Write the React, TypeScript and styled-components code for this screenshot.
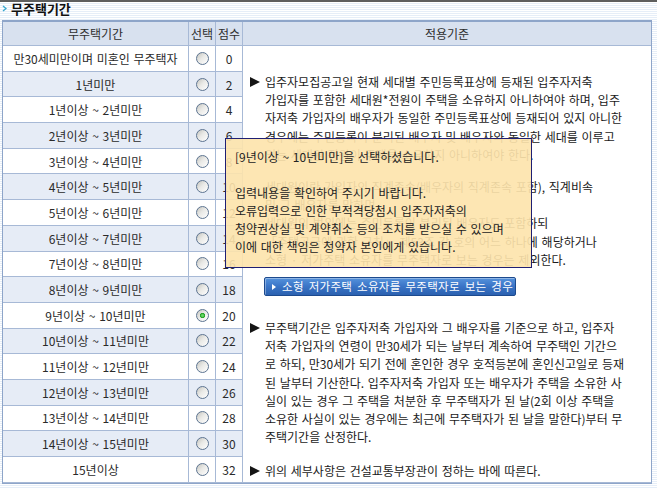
import styled, { createGlobalStyle } from 'styled-components';

const GlobalStyle = createGlobalStyle`
  html, body {
    margin: 0;
    padding: 0;
  }
  body {
    width: 657px;
    height: 489px;
    overflow: hidden;
    font-family: 'Noto Sans CJK KR', 'Noto Sans', sans-serif;
    font-size: 12px;
    color: #1a1a1a;
    background: repeating-linear-gradient(to bottom, #ffffff 0 1px, #e6eef8 1px 2px);
  }
`;

const Page = styled.div`
  position: relative;
  border-top: 2px solid #5e5e5e;
  padding-left: 2px;
`;

const Title = styled.h2`
  margin: 0;
  height: 18px;
  display: flex;
  align-items: flex-start;
  gap: 4px;
  font-size: 13px;
  font-weight: bold;
  line-height: 13px;
  color: #111;
  white-space: nowrap;
`;

const TitleIcon = styled.svg`
  flex: none;
  margin-top: 3px;
`;

const Board = styled.div`
  display: grid;
  grid-template-columns: 186px 27px 27px 408px;
  grid-template-rows: 24px repeat(17, 25.7px);
  width: 650px;
  box-sizing: border-box;
  border: 1px solid #8ea5c9;
  border-top-width: 2px;
  background: #fff;
`;

const HeadCell = styled.div<{ $last?: boolean }>`
  display: flex;
  align-items: center;
  justify-content: center;
  background: #d8e1ef;
  color: #2e2e2e;
  border-bottom: 1px solid #a7b9d6;
  border-right: ${p => (p.$last ? 'none' : '1px solid #a7b9d6')};
  white-space: nowrap;
`;

const Cell = styled.div<{ $alt: boolean }>`
  display: flex;
  align-items: center;
  justify-content: center;
  background: ${p => (p.$alt ? '#e6ecf6' : '#ffffff')};
  color: #2a2a2a;
  border-bottom: 1px solid #a7b9d6;
  border-right: 1px solid #a7b9d6;
  white-space: nowrap;
  word-spacing: 1px;
`;

const Radio = styled.input`
  appearance: none;
  margin: 0 0 0 1px;
  width: 13px;
  height: 13px;
  box-sizing: border-box;
  border-radius: 50%;
  border: 1px solid #5d7491;
  background: ${p =>
    p.checked
      ? 'radial-gradient(circle, #6ad86a 0 0.8px, #22a022 2.2px, transparent 3px), '
      : ''}linear-gradient(135deg, #c4c4be 0%, #e9e9e6 45%, #ffffff 100%);
`;

const Criteria = styled.div`
  grid-column: 4;
  grid-row: 2 / span 17;
  background: #fff;
  border-bottom: 1px solid #a7b9d6;
  padding: 27px 0 0 7px;
  overflow: hidden;
  line-height: 18.2px;
  word-spacing: 1px;
`;

const Para = styled.div<{ $gap?: number; $indent?: boolean }>`
  display: flex;
  margin-top: ${p => p.$gap ?? 0}px;
  padding-left: ${p => (p.$indent ? 15 : 0)}px;
`;

const Bullet = styled.span`
  flex: none;
  width: 0;
  height: 0;
  margin: 4px 5px 0 0;
  border-left: 10px solid #151515;
  border-top: 5px solid transparent;
  border-bottom: 5px solid transparent;
`;

const Lines = styled.div`
  display: flex;
  flex-direction: column;
`;

const Line = styled.span`
  white-space: nowrap;
  min-height: 18px;
`;

const LinkButton = styled.a`
  display: flex;
  align-items: center;
  gap: 6px;
  width: 252px;
  height: 19px;
  box-sizing: border-box;
  margin: 8px 0 0 14px;
  padding: 0 7px;
  border: 1px solid #1d4a8e;
  border-radius: 2px;
  background: linear-gradient(to bottom, #5592dc 0%, #3a74c6 50%, #2b61b0 100%);
  box-shadow: inset 1px 1px 0 rgba(255, 255, 255, 0.35);
  color: #fff;
  font-size: 11.5px;
  letter-spacing: 0.3px;
  word-spacing: 2px;
  text-decoration: none;
  white-space: nowrap;
  cursor: pointer;
`;

const ButtonArrow = styled.span`
  flex: none;
  width: 0;
  height: 0;
  border-left: 4px solid #fff;
  border-top: 3px solid transparent;
  border-bottom: 3px solid transparent;
`;

const Tooltip = styled.div`
  position: absolute;
  left: 225px;
  top: 136px;
  width: 307px;
  height: 130px;
  box-sizing: border-box;
  padding: 9px 9px;
  border: 1px solid #1f1f74;
  background: rgba(253, 228, 172, 0.91);
  color: #222;
  line-height: 18px;
  word-spacing: 1px;
  display: flex;
  flex-direction: column;
`;

type Period = { label: string; score: number };

const periods: Period[] = [
  { label: '만30세미만이며 미혼인 무주택자', score: 0 },
  { label: '1년미만', score: 2 },
  ...Array.from({ length: 14 }, (_, i) => ({
    label: `${i + 1}년이상 ~ ${i + 2}년미만`,
    score: 4 + i * 2,
  })),
  { label: '15년이상', score: 32 },
];

const selected = 10;

const para1 = [
  '입주자모집공고일 현재 세대별 주민등록표상에 등재된 입주자저축',
  '가입자를 포함한 세대원*전원이 주택을 소유하지 아니하여야 하며, 입주',
  '자저축 가입자의 배우자가 동일한 주민등록표상에 등재되어 있지 아니한',
  '경우에는 주민등록이 분리된 배우자 및 배우자와 동일한 세대를 이루고',
  '있는 세대원 전원이 주택을 소유하지 아니하여야 한다.',
];

const para2 = [
  '세대원이란 가입자의 직계존속(배우자의 직계존속 포함), 직계비속',
  '및 그 배우자를 말하며,',
  '세대원의 범위에는 주민등록이 분리된 배우자도 포함하되',
  '「주택공급에 관한 규칙」 제53조 각 호의 어느 하나에 해당하거나',
  '소형 · 저가주택 소유자를 무주택자로 보는 경우는 제외한다.',
];

const para3 = [
  '무주택기간은 입주자저축 가입자와 그 배우자를 기준으로 하고, 입주자',
  '저축 가입자의 연령이 만30세가 되는 날부터 계속하여 무주택인 기간으',
  '로 하되, 만30세가 되기 전에 혼인한 경우 호적등본에 혼인신고일로 등재',
  '된 날부터 기산한다. 입주자저축 가입자 또는 배우자가 주택을 소유한 사',
  '실이 있는 경우 그 주택을 처분한 후 무주택자가 된 날(2회 이상 주택을',
  '소유한 사실이 있는 경우에는 최근에 무주택자가 된 날을 말한다)부터 무',
  '주택기간을 산정한다.',
];

const tipLines = [
  '[9년이상 ~ 10년미만]을 선택하셨습니다.',
  '',
  '입력내용을 확인하여 주시기 바랍니다.',
  '오류입력으로 인한 부적격당첨시 입주자저축의',
  '청약권상실 및 계약취소 등의 조치를 받으실 수 있으며',
  '이에 대한 책임은 청약자 본인에게 있습니다.',
];

const renderLines = (lines: string[]) => lines.map((l, i) => <Line key={i}>{l}</Line>);

const App = () => {
  return (
    <Page>
      <GlobalStyle />
      <Title>
        <TitleIcon width="5" height="7" viewBox="0 0 5 7">
          <polyline points="1,1 4,3.5 1,6" fill="none" stroke="#39a8cf" strokeWidth="1.4" />
        </TitleIcon>
        무주택기간
      </Title>
      <Board>
        <HeadCell>무주택기간</HeadCell>
        <HeadCell>선택</HeadCell>
        <HeadCell>점수</HeadCell>
        <HeadCell $last>적용기준</HeadCell>
        {periods.map((p, i) => {
          const alt = i % 2 === 1;
          return [
            <Cell key={`l${i}`} $alt={alt} style={{ gridColumn: 1, gridRow: i + 2 }}>
              {p.label}
            </Cell>,
            <Cell key={`r${i}`} $alt={alt} style={{ gridColumn: 2, gridRow: i + 2 }}>
              <Radio type="radio" name="period" checked={i === selected} readOnly />
            </Cell>,
            <Cell key={`s${i}`} $alt={alt} style={{ gridColumn: 3, gridRow: i + 2 }}>
              {p.score}
            </Cell>,
          ];
        })}
        <Criteria>
          <Para>
            <Bullet />
            <Lines>{renderLines(para1)}</Lines>
          </Para>
          <Para $gap={14} $indent>
            <Lines>{renderLines(para2)}</Lines>
          </Para>
          <LinkButton>
            <ButtonArrow />
            소형 저가주택 소유자를 무주택자로 보는 경우
          </LinkButton>
          <Para $gap={23}>
            <Bullet />
            <Lines>{renderLines(para3)}</Lines>
          </Para>
          <Para $gap={16}>
            <Bullet />
            <Lines>
              <Line>위의 세부사항은 건설교통부장관이 정하는 바에 따른다.</Line>
            </Lines>
          </Para>
        </Criteria>
      </Board>
      <Tooltip>{renderLines(tipLines)}</Tooltip>
    </Page>
  );
};

export default App;
